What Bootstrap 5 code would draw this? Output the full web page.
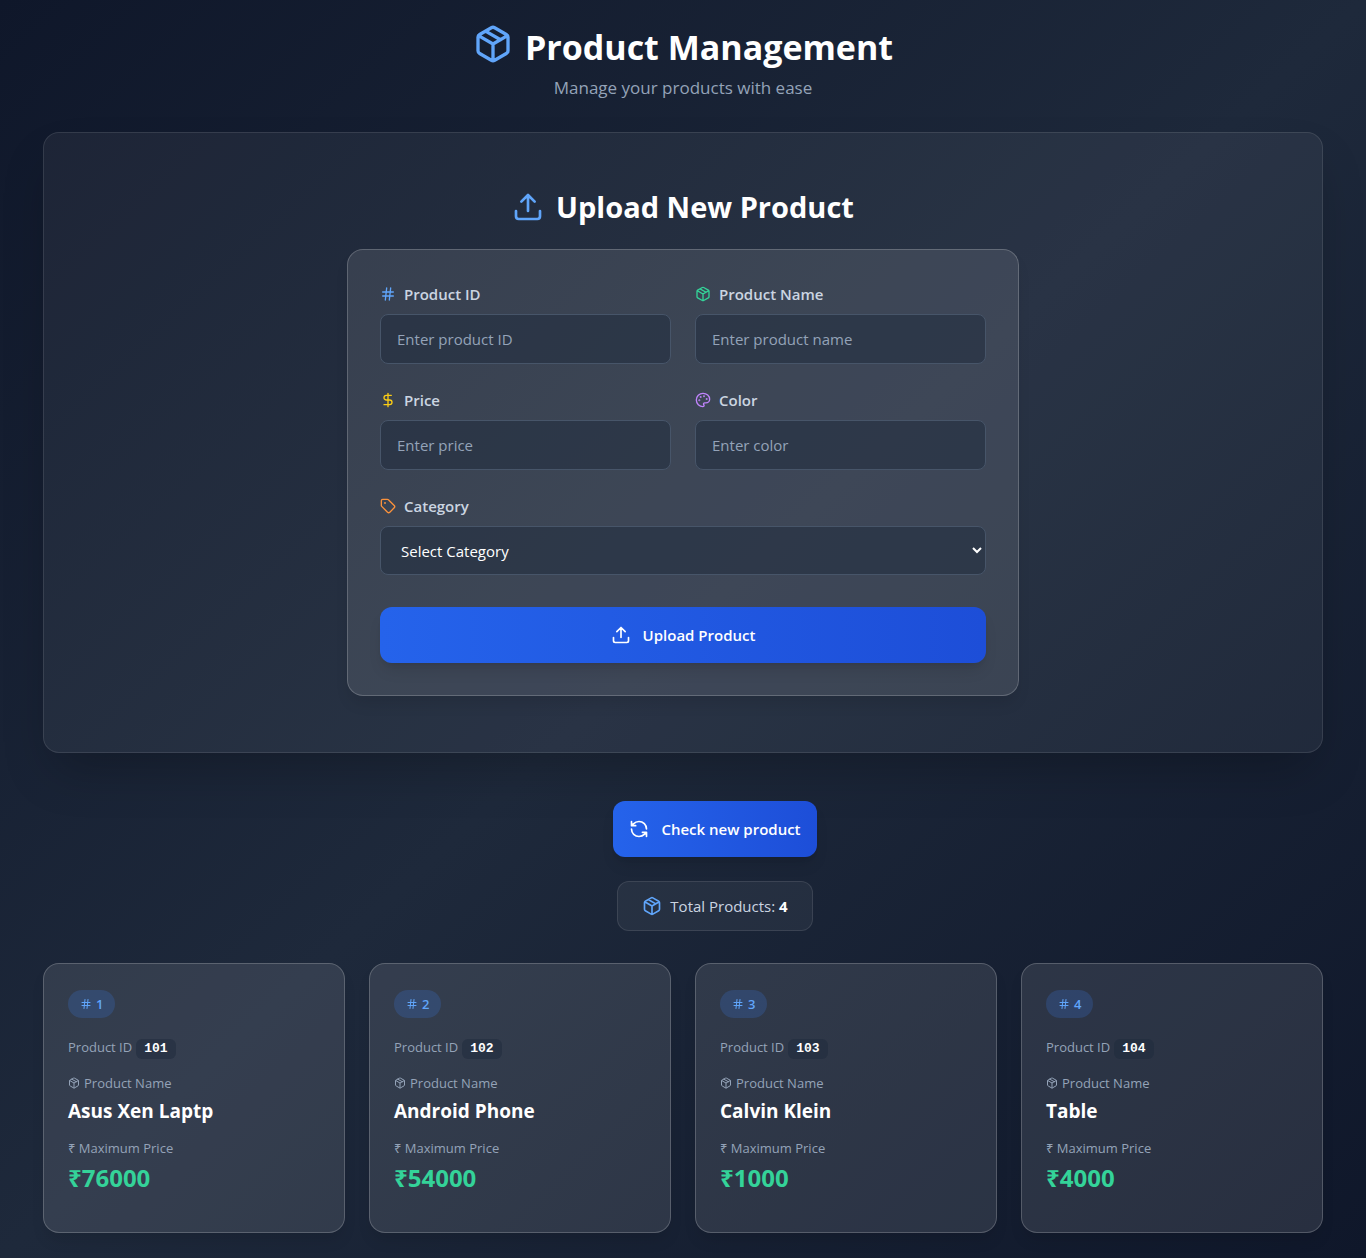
<!DOCTYPE html>
<html lang="en">
<head>
<meta charset="utf-8">
<meta name="viewport" content="width=device-width, initial-scale=1">
<title>Product Management</title>
<link href="https://cdn.jsdelivr.net/npm/bootstrap@5.3.0/dist/css/bootstrap.min.css" rel="stylesheet">
<style>
body{font-family:"Open Sans","Noto Sans",sans-serif;font-size:15px;line-height:24px;color:#fff;min-height:100vh;background:linear-gradient(to bottom right,#0f172a,#1e293b,#0f172a) no-repeat}
svg{fill:none;stroke:currentColor;stroke-width:2;stroke-linecap:round;stroke-linejoin:round;flex:none}
.page-shell{max-width:1328px}
.i12{width:12px;height:12px}.i16{width:16px;height:16px}.i20{width:20px;height:20px}.i32{width:32px;height:32px}.i40{width:40px;height:40px}
.blue{color:#60a5fa}.green{color:#34d399}.yellow{color:#facc15}.purple{color:#c084fc}.orange{color:#fb923c}
h1{font-size:34px;line-height:46px}
h2{font-size:29px;line-height:36px}
.tagline{font-size:17px;line-height:28px;color:#94a3b8}
.upload-panel{padding:56px;margin-top:30px;background:rgba(255,255,255,.05);border:1px solid rgba(255,255,255,.1);border-radius:16px;box-shadow:0 25px 50px -12px rgba(0,0,0,.25)}
.upload-form{max-width:672px;padding:32px;background:rgba(255,255,255,.1);border:1px solid rgba(255,255,255,.2);border-radius:16px;box-shadow:0 10px 15px -3px rgba(0,0,0,.1)}
.form-label{color:#cbd5e1;font-weight:600}
.form-control,.native-select{height:50px;padding:12px 16px;font-size:15px;color:#fff;background:rgba(30,41,59,.5);border:1px solid #475569;border-radius:8px}
.form-control::placeholder{color:#94a3b8}
.native-select{height:49px;padding:12px 0 12px 16px}
.native-select option{background:#1e293b}
.btn-action{height:56px;color:#fff;font-size:15px;font-weight:600;border:0;border-radius:12px;background:linear-gradient(to right,#2563eb,#1d4ed8);box-shadow:0 10px 15px -3px rgba(0,0,0,.1),0 4px 6px -4px rgba(0,0,0,.1)}
.btn-action:hover{color:#fff}
.btn-submit{margin-top:32px}
.summary{padding-left:64px}
.total-box{height:50px;padding:0 24px;color:#cbd5e1;background:rgba(255,255,255,.05);border:1px solid rgba(255,255,255,.1);border-radius:12px}
.product{padding:26px 24px 38px;background:rgba(255,255,255,.1);border:1px solid rgba(255,255,255,.2);border-radius:16px;box-shadow:0 10px 15px -3px rgba(0,0,0,.1)}
.tag-pill{width:fit-content;height:28px;padding:0 12px;font-size:13px;font-weight:600;border-radius:14px;background:rgba(59,130,246,.2)}
.meta{font-size:13px;line-height:20px;color:#94a3b8}
.id-line{margin-top:19px}
.name-line{margin-top:14px}
.price-line{margin-top:13px}
.code-chip{font:bold 13px/20px "Liberation Mono",monospace;color:#fff;padding:0 8px;border-radius:6px;background:rgba(30,41,59,.5)}
h3{font-size:19px;line-height:28px}
.amount{font-size:24px;line-height:32px}
</style>
<script src="https://cdn.jsdelivr.net/npm/bootstrap@5.3.0/dist/js/bootstrap.bundle.min.js"></script>
</head>
<body>
<svg class="d-none">
<symbol id="package" viewBox="0 0 24 24"><path d="M11 21.73a2 2 0 0 0 2 0l7-4A2 2 0 0 0 21 16V8a2 2 0 0 0-1-1.73l-7-4a2 2 0 0 0-2 0l-7 4A2 2 0 0 0 3 8v8a2 2 0 0 0 1 1.73zM12 22V12M3.3 7l8.7 5 8.7-5M7.5 4.27l9 5.15"/></symbol>
<symbol id="upload" viewBox="0 0 24 24"><path d="M21 15v4a2 2 0 0 1-2 2H5a2 2 0 0 1-2-2v-4M17 8l-5-5-5 5M12 3v12"/></symbol>
<symbol id="hash" viewBox="0 0 24 24"><path d="M4 9h16M4 15h16M10 3 8 21M16 3l-2 18"/></symbol>
<symbol id="dollar" viewBox="0 0 24 24"><path d="M12 2v20M17 5H9.5a3.5 3.5 0 0 0 0 7h5a3.5 3.5 0 0 1 0 7H6"/></symbol>
<symbol id="palette" viewBox="0 0 24 24"><g fill="currentColor"><circle cx="13.5" cy="6.5" r=".5"/><circle cx="17.5" cy="10.5" r=".5"/><circle cx="8.5" cy="7.5" r=".5"/><circle cx="6.5" cy="12.5" r=".5"/></g><path d="M12 2C6.5 2 2 6.5 2 12s4.5 10 10 10c.926 0 1.648-.746 1.648-1.688 0-.437-.18-.835-.437-1.125-.29-.289-.438-.652-.438-1.125a1.64 1.64 0 0 1 1.668-1.668h1.996c3.051 0 5.555-2.503 5.555-5.554C21.965 6.012 17.461 2 12 2z"/></symbol>
<symbol id="price-tag" viewBox="0 0 24 24"><path d="M12.586 2.586A2 2 0 0 0 11.172 2H4a2 2 0 0 0-2 2v7.172a2 2 0 0 0 .586 1.414l8.704 8.704a2.426 2.426 0 0 0 3.42 0l6.58-6.58a2.426 2.426 0 0 0 0-3.42z"/><circle cx="7.5" cy="7.5" r=".5" fill="currentColor"/></symbol>
<symbol id="refresh" viewBox="0 0 24 24"><path d="M21 12a9 9 0 0 0-9-9 9.75 9.75 0 0 0-6.74 2.74L3 8M3 3v5h5M3 12a9 9 0 0 0 9 9 9.75 9.75 0 0 0 6.74-2.74L21 16M16 16h5v5"/></symbol>
</svg>
<main class="container-fluid page-shell px-4 py-4">
<header class="text-center">
<h1 class="d-flex justify-content-center gap-2 fw-bold mb-0"><svg class="i40 me-1 blue"><use href="#package"/></svg>Product Management</h1>
<p class="tagline mb-0 mt-1">Manage your products with ease</p>
</header>
<section class="upload-panel">
<h2 class="d-flex justify-content-center align-items-center gap-2 fw-bold mb-4"><svg class="i32 me-1 blue"><use href="#upload"/></svg>Upload New Product</h2>
<form class="upload-form mx-auto">
<div class="row g-4">
<div class="col-sm-6"><label class="form-label d-flex align-items-center gap-2 mb-2" for="pid"><svg class="i16 blue"><use href="#hash"/></svg>Product ID</label><input class="form-control" id="pid" placeholder="Enter product ID"></div>
<div class="col-sm-6"><label class="form-label d-flex align-items-center gap-2 mb-2" for="pname"><svg class="i16 green"><use href="#package"/></svg>Product Name</label><input class="form-control" id="pname" placeholder="Enter product name"></div>
<div class="col-sm-6"><label class="form-label d-flex align-items-center gap-2 mb-2" for="price"><svg class="i16 yellow"><use href="#dollar"/></svg>Price</label><input class="form-control" id="price" placeholder="Enter price"></div>
<div class="col-sm-6"><label class="form-label d-flex align-items-center gap-2 mb-2" for="color"><svg class="i16 purple"><use href="#palette"/></svg>Color</label><input class="form-control" id="color" placeholder="Enter color"></div>
<div class="col-12"><label class="form-label d-flex align-items-center gap-2 mb-2" for="category"><svg class="i16 orange"><use href="#price-tag"/></svg>Category</label><select class="native-select d-block w-100" id="category"><option>Select Category</option></select></div>
</div>
<button type="button" class="btn btn-action btn-submit w-100 d-flex align-items-center justify-content-center gap-2"><svg class="i20 me-1"><use href="#upload"/></svg>Upload Product</button>
</form>
</section>
<section class="summary d-flex flex-column align-items-center gap-4 mt-5">
<button type="button" class="btn btn-action px-3 d-flex align-items-center gap-2"><svg class="i20 me-1"><use href="#refresh"/></svg>Check new product</button>
<div class="total-box d-flex align-items-center gap-2"><svg class="i20 blue"><use href="#package"/></svg><span>Total Products: <strong class="text-white">4</strong></span></div>
</section>
<section class="row g-4 row-cols-1 row-cols-sm-2 row-cols-lg-4 mt-2">
<div class="col"><article class="product">
<div class="tag-pill blue d-flex align-items-center gap-1"><svg class="i12"><use href="#hash"/></svg>1</div>
<div class="meta id-line d-flex align-items-baseline gap-1">Product ID <code class="code-chip">101</code></div>
<div class="meta name-line d-flex align-items-center gap-1"><svg class="i12"><use href="#package"/></svg>Product Name</div>
<h3 class="fw-bold mt-1 mb-0">Asus Xen Laptp</h3>
<div class="meta price-line">₹ Maximum Price</div>
<div class="amount green fw-bold mt-1">₹76000</div>
</article></div>
<div class="col"><article class="product">
<div class="tag-pill blue d-flex align-items-center gap-1"><svg class="i12"><use href="#hash"/></svg>2</div>
<div class="meta id-line d-flex align-items-baseline gap-1">Product ID <code class="code-chip">102</code></div>
<div class="meta name-line d-flex align-items-center gap-1"><svg class="i12"><use href="#package"/></svg>Product Name</div>
<h3 class="fw-bold mt-1 mb-0">Android Phone</h3>
<div class="meta price-line">₹ Maximum Price</div>
<div class="amount green fw-bold mt-1">₹54000</div>
</article></div>
<div class="col"><article class="product">
<div class="tag-pill blue d-flex align-items-center gap-1"><svg class="i12"><use href="#hash"/></svg>3</div>
<div class="meta id-line d-flex align-items-baseline gap-1">Product ID <code class="code-chip">103</code></div>
<div class="meta name-line d-flex align-items-center gap-1"><svg class="i12"><use href="#package"/></svg>Product Name</div>
<h3 class="fw-bold mt-1 mb-0">Calvin Klein</h3>
<div class="meta price-line">₹ Maximum Price</div>
<div class="amount green fw-bold mt-1">₹1000</div>
</article></div>
<div class="col"><article class="product">
<div class="tag-pill blue d-flex align-items-center gap-1"><svg class="i12"><use href="#hash"/></svg>4</div>
<div class="meta id-line d-flex align-items-baseline gap-1">Product ID <code class="code-chip">104</code></div>
<div class="meta name-line d-flex align-items-center gap-1"><svg class="i12"><use href="#package"/></svg>Product Name</div>
<h3 class="fw-bold mt-1 mb-0">Table</h3>
<div class="meta price-line">₹ Maximum Price</div>
<div class="amount green fw-bold mt-1">₹4000</div>
</article></div>
</section>
</main>
</body>
</html>
